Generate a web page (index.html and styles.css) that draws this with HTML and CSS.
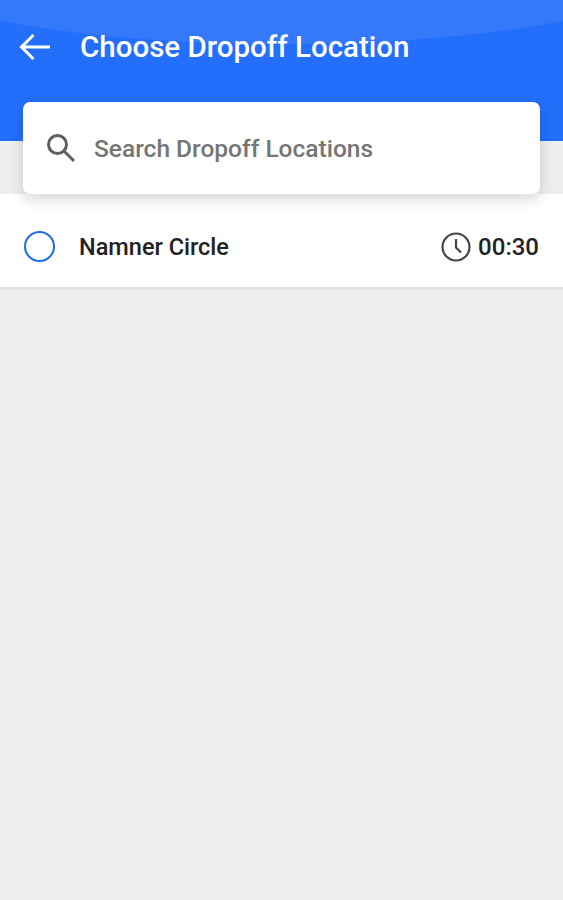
FILE: index.html
```html
<!DOCTYPE html>
<html lang="en">
<head>
<meta charset="utf-8">
<title>Choose Dropoff Location</title>
<link rel="stylesheet" href="styles.css">
</head>
<body>
<div class="screen">
  <header class="header">
    <div class="header-curve"></div>
    <div class="header-bar">
      <svg class="back-icon" viewBox="0 0 32 28" fill="none" stroke="#fff" stroke-width="3"><path d="M31 14H3M14.500 2 2.500 14l12 12"/></svg>
      <h1 class="title">Choose Dropoff Location</h1>
    </div>
  </header>
  <div class="search-card">
    <svg class="search-icon" viewBox="0 0 30 30" fill="none" stroke="#5f5f5f" stroke-width="3"><circle cx="11.500" cy="11.500" r="9"/><path d="M18 18l10 10"/></svg>
    <span class="search-text">Search Dropoff Locations</span>
  </div>
  <div class="row">
    <span class="radio"></span>
    <span class="name">Namner Circle</span>
    <svg class="clock-icon" viewBox="0 0 30 30" fill="none" stroke="#444" stroke-width="2.200"><circle cx="15" cy="15" r="13.500"/><path d="M15 7v8.500l5 5"/></svg>
    <span class="time">00:30</span>
  </div>
</div>
</body>
</html>
```
FILE: styles.css
```css
* { box-sizing: border-box; }
html, body { margin: 0; padding: 0; }
body { background: #eeeeee; font-family: Roboto, "Liberation Sans", sans-serif; }
.screen { width: 563px; height: 900px; overflow: hidden; }
.header { position: relative; height: 141px; background: #236ffb; overflow: hidden; padding-top: 26px; }
.header-curve { position: absolute; left: -120px; top: -118px; width: 803px; height: 162px; border-radius: 50%; background: #3579fb; }
.header-bar { position: relative; display: flex; align-items: center; height: 42px; padding-left: 19px; }
.back-icon { width: 32px; height: 28px; flex: none; }
.title { margin: 0 0 0 29px; font-size: 29.500px; font-weight: 500; color: #fff; white-space: nowrap; letter-spacing: 0; }
.search-card { position: relative; display: flex; align-items: center; width: 517px; height: 92px; margin: -39px 0 0 23px; padding-left: 23px; background: #fff; border-radius: 7px; box-shadow: 0 5px 14px rgba(0,0,0,.16); }
.search-icon { width: 30px; height: 30px; flex: none; }
.search-text { margin-left: 18px; font-size: 24.500px; font-weight: 500; color: #757575; white-space: nowrap; }
.row { display: flex; align-items: center; height: 96px; margin-bottom: 0; padding: 12px 24px 0 24px; background: #fff; border-bottom: 3px solid #e2e2e2; }
.radio { width: 31px; height: 31px; flex: none; border: 2.500px solid #1a6fe8; border-radius: 50%; }
.name { flex: 1; margin-left: 24px; font-size: 23.500px; font-weight: 500; color: #222; white-space: nowrap; }
.clock-icon { width: 30px; height: 30px; flex: none; }
.time { margin-left: 7px; font-size: 24px; font-weight: 500; color: #222; white-space: nowrap; }
```
